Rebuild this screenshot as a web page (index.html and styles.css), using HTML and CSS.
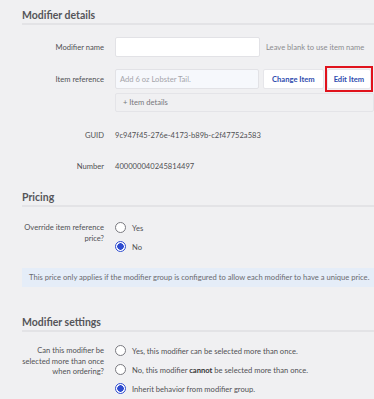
FILE: index.html
```html
<!DOCTYPE html>
<html>
<head>
<meta charset="utf-8">
<link rel="stylesheet" href="styles.css">
</head>
<body>
<div class="page">
  <section class="section">
    <h2 class="heading">Modifier details</h2>
    <div class="row row-name">
      <div class="label">Modifier name</div>
      <div class="control">
        <div class="input"></div>
        <span class="hint">Leave blank to use item name</span>
      </div>
    </div>
    <div class="row row-ref">
      <div class="label">Item reference</div>
      <div class="control col">
        <div class="ref-line">
          <div class="input input-ref"><span class="placeholder">Add 6 oz Lobster Tail.</span></div>
          <button class="btn">Change Item</button>
          <span class="highlight"><button class="btn">Edit Item</button></span>
        </div>
        <div class="details">+ Item details</div>
      </div>
    </div>
    <div class="row row-text row-guid">
      <div class="label">GUID</div>
      <div class="control value">9c947f45-276e-4173-b89b-c2f47752a583</div>
    </div>
    <div class="row row-text">
      <div class="label">Number</div>
      <div class="control value">400000040245814497</div>
    </div>
  </section>

  <section class="section section-pricing">
    <h2 class="heading">Pricing</h2>
    <div class="row row-radio">
      <div class="label">Override item reference price?</div>
      <div class="control col radios">
        <label class="radio"><span class="dot"></span><span>Yes</span></label>
        <label class="radio"><span class="dot on"></span><span>No</span></label>
      </div>
    </div>
    <div class="info">This price only applies if the modifier group is configured to allow each modifier to have a unique price.</div>
  </section>

  <section class="section section-settings">
    <h2 class="heading">Modifier settings</h2>
    <div class="row row-radio row-radio-settings">
      <div class="label">Can this modifier be selected more than once when ordering?</div>
      <div class="control col radios">
        <label class="radio"><span class="dot"></span><span>Yes, this modifier can be selected more than once.</span></label>
        <label class="radio"><span class="dot"></span><span>No, this modifier <b>cannot</b> be selected more than once.</span></label>
        <label class="radio"><span class="dot on"></span><span>Inherit behavior from modifier group.</span></label>
      </div>
    </div>
  </section>
</div>
</body>
</html>
```

FILE: styles.css
```css
html, body {
  margin: 0;
  padding: 0;
  overflow: hidden;
  background: #f0f0f2;
}
body {
  font-family: Lato, "Liberation Sans", sans-serif;
  font-size: 7.6px;
  color: #505054;
}
.page {
  width: 380px;
  padding: 8px 0 0 22px;
}
.section {
  display: flex;
  flex-direction: column;
}
.heading {
  margin: 0;
  font-size: 10.5px;
  font-weight: 700;
  color: #555559;
  height: 15px;
  line-height: 15px;
  border-bottom: 2px solid #e3e3e6;
}
.row {
  display: flex;
  gap: 11px;
}
.label {
  width: 82px;
  flex: none;
  text-align: right;
  line-height: 10.5px;
}
.control {
  display: flex;
  align-items: center;
  gap: 6px;
}
.col {
  flex-direction: column;
  align-items: flex-start;
  gap: 4px;
}
.row-name {
  margin-top: 12px;
  align-items: center;
}
.input {
  width: 143px;
  height: 18px;
  background: #fff;
  border: 1px solid #e2e2e6;
  border-radius: 2px;
  box-sizing: content-box;
}
.hint {
  color: #8c8c90;
}
.row-ref {
  margin-top: 12px;
}
.row-ref .label {
  padding-top: 5px;
}
.ref-line {
  display: flex;
  align-items: center;
  gap: 4px;
}
.input-ref {
  background: #f6f8fc;
  display: flex;
  align-items: center;
  padding-left: 4px;
  width: 138px;
}
.placeholder {
  color: #a4a4aa;
}
.btn {
  font: inherit;
  font-weight: 700;
  color: #2f4cae;
  background: #fff;
  border: 1px solid #e6e6ea;
  border-radius: 2px;
  height: 20px;
  padding: 0 8px;
  white-space: nowrap;
}
.highlight {
  position: relative;
  display: inline-flex;
  margin-left: -1px;
}
.highlight .btn {
  padding: 0 6px;
}
.highlight::after {
  content: "";
  position: absolute;
  left: -2px;
  top: -3px;
  right: -2px;
  bottom: -3px;
  border: 2px solid #e0121c;
}
.details {
  width: 250px;
  height: 17px;
  line-height: 17px;
  border: 1px solid #e4e4e8;
  border-radius: 2px;
  padding-left: 7px;
  color: #77777c;
}
.row-text {
  height: 10px;
  line-height: 10px;
}
.row-guid {
  margin-top: 18px;
}
.row-text + .row-text {
  margin-top: 21px;
}
.section-pricing {
  margin-top: 19px;
}
.section-settings {
  margin-top: 28px;
}
.row-radio {
  margin-top: 15px;
}
.row-radio-settings {
  margin-top: 13px;
}
.radios {
  gap: 8px;
}
.radio {
  display: flex;
  align-items: center;
  gap: 6px;
  height: 11px;
  white-space: nowrap;
}
.dot {
  width: 9px;
  height: 9px;
  border: 1px solid #7a7a80;
  border-radius: 50%;
  background: #fff;
  flex: none;
  box-sizing: content-box;
}
.dot.on {
  border-color: #2f4cd0;
  background: radial-gradient(circle, #2f4cd0 0 3px, #fff 3.5px);
}
.radio b {
  font-weight: 700;
  color: #333;
}
.info {
  margin-top: 16px;
  height: 19px;
  line-height: 19px;
  background: #e5edf8;
  padding-left: 7px;
  color: #6a6a70;
  white-space: nowrap;
}
```
